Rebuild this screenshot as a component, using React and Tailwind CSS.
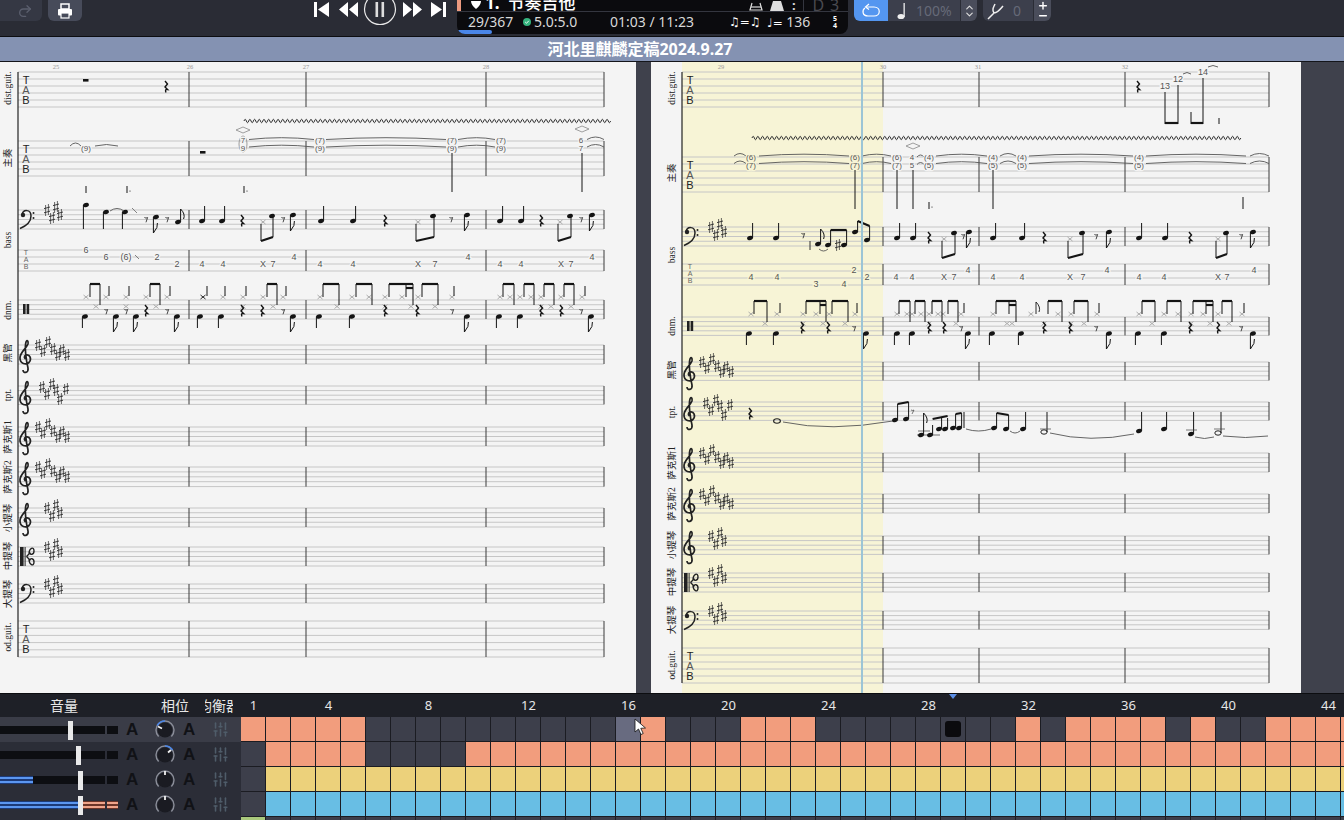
import React from "react";
import { Redo2, SlidersVertical, ChevronUp, ChevronDown, Plus, Minus } from "lucide-react";

const INK = "#141414";
const LINE = "#c6c6c6";

// ---- score drawing helpers ----
const Note = ({ x, y, up, to, flag }) => {
  const sx = up ? x + 2.6 : x - 2.6;
  return (
    <g>
      <ellipse cx={x} cy={y} rx="3" ry="2.1" transform={`rotate(-22 ${x} ${y})`} fill={INK} />
      <line x1={sx} y1={y} x2={sx} y2={to} stroke={INK} strokeWidth="1" />
      {flag && <path d={`M${sx} ${to} q${up ? 5 : 5} ${up ? 5 : -6} ${up ? 3 : 4} ${up ? 10 : -10}`} fill="none" stroke={INK} strokeWidth="1" />}
    </g>
  );
};

const RestQ = ({ x, y }) => (
  <path d={`M${x - 1} ${y - 5} l2.5 3 l-2.5 3 l2.5 2.5 q-3 -.5 -1.5 3`} fill="none" stroke={INK} strokeWidth="1.4" />
);
const Rest8 = ({ x, y }) => (
  <path d={`M${x - 1.6} ${y - 1.5} q1.6 1.2 3.2 0 l-1.6 4.8`} fill="none" stroke="#333" strokeWidth=".9" />
);
const Xh = ({ x, y, c = "#a4a4a4" }) => (
  <path d={`M${x - 2.5} ${y - 2} l5 4 M${x + 2.5} ${y - 2} l-5 4`} stroke={c} strokeWidth=".9" />
);
const Beam = ({ x1, x2, y1, y2 }) => (
  <line x1={x1} x2={x2} y1={y1} y2={y2 ?? y1} stroke={INK} strokeWidth="2.2" />
);
const Stem = ({ x, y1, y2, c = INK, w = 1 }) => <line x1={x} x2={x} y1={y1} y2={y2} stroke={c} strokeWidth={w} />;
const Tie = ({ x1, x2, y, h = 3, flip }) => (
  <path d={`M${x1} ${y} Q${(x1 + x2) / 2} ${flip ? y + h * 2 : y - h * 2} ${x2} ${y}`} fill="none" stroke="#555" strokeWidth=".9" />
);
const Num = ({ x, y, t, bg = "#f4f4f4", size = 9, c = "#555" }) => (
  <text x={x} y={y + 3.2} textAnchor="middle" fontSize={size} fontFamily="Liberation Sans" fill={c} stroke={bg} strokeWidth="2.5" paintOrder="stroke">{t}</text>
);
const Sharp = ({ x, y }) => (
  <g stroke="#2a2a2a">
    <path d={`M${x - 1.4} ${y - 5} v11 M${x + 1.4} ${y - 6} v11`} strokeWidth=".7" />
    <path d={`M${x - 3} ${y - 1.4} l6 -1.6 M${x - 3} ${y + 2.8} l6 -1.6`} strokeWidth=".9" />
  </g>
);
const Treble = ({ x, y }) => (
  <path transform={`translate(${x} ${y})`} d="M7.5 19 C5 19 4.5 16 7 15 C11 14 13 19 10 22.5 C7 25 1 24 1 18 C1 12 7 9 9 4 C9.5 1 8 -1 7 2 C5.5 7 7 20 9 28 C9.8 33 4 34 4 30" fill="none" stroke="#222" strokeWidth="1.7" />
);
const BassClef = ({ x, y }) => (
  <g transform={`translate(${x} ${y})`}>
    <path d="M2 5 C3 -1 11 -1 11 6 C11 12 6 16 0 18.5" fill="none" stroke="#222" strokeWidth="1.5" />
    <circle cx="3" cy="5" r="2.2" fill="#222" />
    <circle cx="13.5" cy="3" r="1" fill="#222" />
    <circle cx="13.5" cy="8" r="1" fill="#222" />
  </g>
);
const AltoClef = ({ x, y }) => (
  <g transform={`translate(${x} ${y})`}>
    <rect x="0" y="0" width="3.6" height="19" fill="#222" />
    <rect x="4.6" y="0" width="1" height="19" fill="#222" />
    <path d="M6.5 9.5 L9 7 C9 1 14 -1 14 4 C14 8 10 8.5 9.5 5 M6.5 9.5 L9 12 C9 18 14 20 14 15 C14 11 10 10.5 9.5 14" fill="none" stroke="#222" strokeWidth="1.4" />
  </g>
);
const TabMark = ({ x, top, small }) =>
  small ? (
    <g fontFamily="Liberation Sans" fontSize="7" fill="#666" textAnchor="middle">
      <text x={x} y={top + 5}>T</text>
      <text x={x} y={top + 12}>A</text>
      <text x={x} y={top + 19}>B</text>
    </g>
  ) : (
    <g fontFamily="Liberation Sans" fontSize="11" fill="#222" textAnchor="middle">
      <text x={x} y={top + 12}>T</text>
      <text x={x} y={top + 22} fill="#555">A</text>
      <text x={x} y={top + 32}>B</text>
    </g>
  );

const Wave = ({ x1, x2, y }) => {
  let d = `M${x1} ${y}`;
  for (let x = x1; x < x2; x += 4.7) d += ` q1.2 -3.4 2.35 0 t2.35 0`;
  return <path d={d} fill="none" stroke="#333" strokeWidth="1" />;
};

const Diamond = ({ x, y }) => (
  <path d={`M${x - 7} ${y} L${x} ${y - 3} L${x + 7} ${y} L${x} ${y + 3} Z`} fill="none" stroke="#888" strokeWidth=".8" />
);

const Lines = ({ x1, x2, top, n, gap }) =>
  Array.from({ length: n }).map((_, i) => (
    <line key={i} x1={x1} x2={x2} y1={top + i * gap} y2={top + i * gap} stroke={LINE} strokeWidth="1" />
  ));

const KEY7 = [[20, 0], [25, 6], [30, -3], [35, 4], [40, 10], [44, 5], [49, 10]];
const KEY6 = [[24, 1], [29, 8], [34, -2], [38, 4], [42, 13], [48, 3]];
const KEY4 = [[29, 0], [34, 8], [38, -3], [42, 5]];

// one instrument staff: lines, barlines, clef, key, rotated label
const Staff = ({ s, left, bars }) => {
  const h = (s.n - 1) * s.gap;
  return (
    <g>
      <Lines x1={left} x2={bars[bars.length - 1]} top={s.top} n={s.n} gap={s.gap} />
      {bars.map((b) => <Stem key={b} x={b} y1={s.top} y2={s.top + h} c="#3a3a3a" />)}
      {s.clef === "t" && <Treble x={left + 1} y={s.top - 5} />}
      {s.clef === "b" && <BassClef x={left + 2} y={s.top} />}
      {s.clef === "a" && <AltoClef x={left + 2} y={s.top} />}
      {s.clef === "p" && <g fill="#222"><rect x={left + 5} y={s.top + 4} width="2.6" height="10" /><rect x={left + 8.6} y={s.top + 4} width="2.6" height="10" /></g>}
      {s.clef === "T" && <TabMark x={left + 8} top={s.top} />}
      {s.clef === "s" && <TabMark x={left + 8} top={s.top} small />}
      {(s.key || []).map(([kx, ky], i) => <Sharp key={i} x={left + kx} y={s.top + ky} />)}
      <text
        transform={`translate(${left - 7} ${s.labelY}) rotate(-90)`}
        textAnchor="middle"
        fontSize="9.5"
        fontFamily="'Liberation Serif','Noto Sans CJK SC',serif"
        fill="#222"
      >
        {s.label}
      </text>
    </g>
  );
};

const BassBar = ({ top, p }) => {
  const [a, b, r, x, n, r8, e] = p;
  return (
    <g>
      <Note x={a} y={top + 11} up to={top - 4} />
      <Note x={b} y={top + 11} up to={top - 4} />
      <RestQ x={r} y={top + 10} />
      <Xh x={x} y={top + 12} />
      <Note x={n} y={top + 6} up to={top + 6} />
      <Stem x={x - 2} y1={top + 14} y2={top + 31} />
      <Stem x={n + 1} y1={top + 6} y2={top + 27} />
      <Beam x1={x - 2} x2={n + 1} y1={top + 31} y2={top + 27} />
      <Rest8 x={r8} y={top + 9} />
      <Note x={e} y={top + 5} to={top + 21} flag />
    </g>
  );
};

const DrumBar = ({ top, xs = [], low = [], beams = [], single = [], q = [], e = [], rq = [], r8 = [] }) => (
  <g>
    {xs.map((x) => <Xh key={x} x={x} y={top - 3} />)}
    {low.map((x) => <Xh key={x} x={x} y={top + 6.5} />)}
    {beams.map(([a, b, sub], i) => (
      <g key={i}>
        <Beam x1={a} x2={b} y1={top - 16} />
        <Stem x={a} y1={top - 16} y2={top - 3} />
        <Stem x={b} y1={top - 16} y2={top + 5} />
        {sub && <><Beam x1={sub} x2={b} y1={top - 12} /><Stem x={sub} y1={top - 16} y2={top - 3} /></>}
      </g>
    ))}
    {single.map((x) => <Stem key={x} x={x} y1={top - 14} y2={top - 4} />)}
    {q.map((x) => <Note key={x} x={x} y={top + 16.5} to={top + 28} />)}
    {e.map((x) => <Note key={x} x={x} y={top + 16.5} to={top + 32} flag />)}
    {rq.map((x) => <RestQ key={x} x={x} y={top + 10} />)}
    {r8.map((x) => <Rest8 key={x} x={x} y={top + 11} />)}
  </g>
);

const BarNo = ({ x, t }) => <text x={x} y="69" textAnchor="middle" fontSize="6.5" fontFamily="Liberation Serif" fill="#999">{t}</text>;

const PAGE1 = [
  { label: "dist.guit.", top: 72, n: 6, gap: 7, clef: "T", labelY: 88 },
  { label: "主奏", top: 141, n: 6, gap: 7, clef: "T", labelY: 158 },
  { label: "bass", top: 210, n: 5, gap: 4.75, clef: "b", key: KEY4, labelY: 240 },
  { label: "", top: 250, n: 4, gap: 7, clef: "s", labelY: 260 },
  { label: "dnm.", top: 300, n: 5, gap: 4.75, clef: "p", labelY: 310 },
  { label: "黑管", top: 345, n: 5, gap: 4.75, clef: "t", key: KEY7, labelY: 353 },
  { label: "tpt.", top: 386, n: 5, gap: 4.6, clef: "t", key: KEY6, labelY: 395 },
  { label: "萨克斯1", top: 427, n: 5, gap: 4.75, clef: "t", key: KEY7, labelY: 437 },
  { label: "萨克斯2", top: 467, n: 5, gap: 4.9, clef: "t", key: KEY7, labelY: 477 },
  { label: "小提琴", top: 508, n: 5, gap: 4.75, clef: "t", key: KEY4, labelY: 518 },
  { label: "中提琴", top: 547, n: 5, gap: 4.75, clef: "a", key: KEY4, labelY: 556 },
  { label: "大提琴", top: 584, n: 5, gap: 4.75, clef: "b", key: KEY4, labelY: 594 },
  { label: "od.guit.", top: 621, n: 6, gap: 7.2, clef: "T", labelY: 637 },
];

const PAGE2 = [
  { label: "dist.guit.", top: 72, n: 6, gap: 7, clef: "T", labelY: 88 },
  { label: "主奏", top: 157, n: 6, gap: 7, clef: "T", labelY: 173 },
  { label: "bass", top: 227, n: 5, gap: 4.75, clef: "b", key: KEY4, labelY: 255 },
  { label: "", top: 264, n: 4, gap: 7, clef: "s", labelY: 270 },
  { label: "dnm.", top: 317, n: 5, gap: 4.6, clef: "p", labelY: 326 },
  { label: "黑管", top: 362, n: 5, gap: 4.6, clef: "t", key: KEY7, labelY: 370 },
  { label: "tpt.", top: 402, n: 5, gap: 4.6, clef: "t", key: KEY6, labelY: 412 },
  { label: "萨克斯1", top: 453, n: 5, gap: 4.75, clef: "t", key: KEY7, labelY: 463 },
  { label: "萨克斯2", top: 494, n: 5, gap: 4.75, clef: "t", key: KEY7, labelY: 504 },
  { label: "小提琴", top: 536, n: 5, gap: 4.6, clef: "t", key: KEY4, labelY: 545 },
  { label: "中提琴", top: 573, n: 5, gap: 4.75, clef: "a", key: KEY4, labelY: 582 },
  { label: "大提琴", top: 611, n: 5, gap: 4.6, clef: "b", key: KEY4, labelY: 620 },
  { label: "od.guit.", top: 648, n: 6, gap: 7, clef: "T", labelY: 665 },
];

const Chord = ({ x, a, b, y, bg, paren = true }) => (
  <g>
    <Num x={x} y={y} t={paren ? `(${a})` : a} bg={bg} size="8" />
    <Num x={x} y={y + 7.5} t={paren ? `(${b})` : b} bg={bg} size="8" />
  </g>
);
const DoubleTie = ({ x1, x2, y, h = 1.8 }) => (
  <g><Tie x1={x1} x2={x2} y={y} h={h} /><Tie x1={x1} x2={x2} y={y + 7.5} h={h} /></g>
);

const ScorePageOne = () => (
  <svg viewBox="0 62 636 631" className="block w-full h-full">
    <BarNo x={56} t="25" /><BarNo x={190} t="26" /><BarNo x={306} t="27" /><BarNo x={486} t="28" />
    {PAGE1.map((s) => <Staff key={s.top} s={s} left={18} bars={[189, 306, 486, 604]} />)}
    <Stem x={18} y1={72} y2={657} c="#222" w={1.2} />

    {/* dist guit */}
    <rect x="83" y="79" width="5.5" height="2.6" fill={INK} />
    <RestQ x={166} y={86} />

    {/* lead */}
    <Wave x1={244} x2={606} y={121} />
    <Tie x1={70} x2={81} y={146} />
    <Num x={86} y={148} t="(9)" size="8" />
    <Tie x1={95} x2={118} y={146} h={1.5} />
    <rect x="200" y="151" width="5.5" height="2.6" fill={INK} />
    <Diamond x={243} y={130} />
    <ellipse cx="243" cy="144" rx="4" ry="8" fill="none" stroke="#888" strokeWidth=".8" />
    <Chord x={243} a="7" b="9" y={140} paren={false} />
    <DoubleTie x1={249} x2={314} y={139.5} />
    <Chord x={320} a="7" b="9" y={140} />
    <DoubleTie x1={326} x2={446} y={139.5} />
    <Chord x={452} a="7" b="9" y={140} />
    <DoubleTie x1={458} x2={495} y={139.5} />
    <Chord x={501} a="7" b="9" y={140} />
    <Diamond x={582} y={129} />
    <Chord x={581} a="6" b="7" y={140} paren={false} />
    <DoubleTie x1={587} x2={604} y={139.5} h={2.5} />
    <Stem x={452} y1={153} y2={192} /><Stem x={582} y1={153} y2={192} />
    <Stem x={86} y1={186} y2={193} /><Stem x={127} y1={186} y2={193} /><Stem x={244} y1={186} y2={193} />
    <circle cx="130" cy="191" r=".6" fill={INK} /><circle cx="247" cy="191" r=".6" fill={INK} />

    {/* bass */}
    <Note x={86} y={205} to={229} />
    <Note x={106} y={212} to={229} />
    <Note x={125} y={212} to={229} />
    <Tie x1={110} x2={124} y={211} h={2.5} />
    <path d="M132 208 l5 5" stroke="#666" strokeWidth=".8" />
    <Rest8 x={146} y={219} />
    <Note x={156} y={217} to={233} flag />
    <Rest8 x={167} y={219} />
    <Note x={178} y={222} up to={209} flag />
    <BassBar top={210} p={[202, 222, 242, 263, 272, 283, 293]} />
    <BassBar top={210} p={[321, 353, 385, 418, 433, 451, 467]} />
    <BassBar top={210} p={[500, 521, 541, 560, 570, 581, 592]} />

    {/* bass tab */}
    {[[86, 250, "6"], [106, 257, "6"], [126, 257, "(6)"], [157, 257, "2"], [177, 264, "2"], [202, 264, "4"], [223, 264, "4"], [263, 264, "X"], [273, 264, "7"], [294, 257, "4"], [320, 264, "4"], [353, 264, "4"], [418, 264, "X"], [435, 264, "7"], [468, 257, "4"], [500, 264, "4"], [521, 264, "4"], [561, 264, "X"], [571, 264, "7"], [592, 257, "4"]].map(([x, y, t], i) => <Num key={i} x={x} y={y} t={t} />)}
    <path d="M135 255 l4 4" stroke="#666" strokeWidth=".8" />

    {/* drums */}
    <DrumBar top={300} xs={[86, 106, 126, 146, 167]} low={[96, 126, 156]} beams={[[90, 100], [150, 160]]} single={[109, 129, 170]} q={[85]} e={[116, 136, 177]} rq={[146]} r8={[106, 126, 167]} />
    <Xh x={203} y={297} c="#111" />
    <DrumBar top={300} xs={[223, 243, 263, 283]} low={[243, 273]} beams={[[267, 277]]} single={[207, 225, 246, 286]} q={[200, 221]} e={[293]} rq={[242, 262]} r8={[283]} />
    <DrumBar top={300} xs={[320, 352, 369, 385, 402, 418, 452]} low={[337, 385, 411, 435]} beams={[[323, 339], [356, 372], [389, 413, 406], [422, 438]]} single={[454]} q={[319, 352]} e={[467]} rq={[385, 417]} r8={[452]} />
    <DrumBar top={300} xs={[500, 510, 520, 531, 541, 561, 582]} low={[541, 551, 571]} beams={[[503, 514], [524, 534], [544, 554], [564, 574]]} single={[585]} q={[499, 520]} e={[591]} rq={[541, 561]} r8={[581]} />
  </svg>
);

const Y = "#f7f4d6";

const ScorePageTwo = () => (
  <svg viewBox="651 62 650 631" className="block w-full h-full">
    <rect x="682" y="62" width="201" height="631" fill={Y} />
    <BarNo x={721} t="29" /><BarNo x={883} t="30" /><BarNo x={978} t="31" /><BarNo x={1125} t="32" />
    {PAGE2.map((s) => <Staff key={s.top} s={s} left={682} bars={[883, 979, 1125, 1269]} />)}
    <Stem x={682} y1={72} y2={683} c="#222" w={1.2} />

    {/* dist guit */}
    <RestQ x={1138} y={86} />
    <Num x={1165} y={86} t="13" />
    <Num x={1178} y={79} t="12" />
    <Num x={1203} y={72} t="14" />
    <Stem x={1165} y1={92} y2={124} /><Stem x={1178} y1={85} y2={124} /><Beam x1={1165} x2={1178} y1={123} />
    <Stem x={1191} y1={112} y2={124} /><Stem x={1203} y1={78} y2={124} /><Beam x1={1191} x2={1203} y1={123} />
    <Stem x={1219} y1={118} y2={124} />
    <Tie x1={1183} x2={1191} y={74} h={1.5} /><Tie x1={1208} x2={1218} y={67} h={1.5} />

    {/* lead */}
    <Wave x1={752} x2={1238} y={138} />
    <Diamond x={913} y={146} />
    <DoubleTie x1={734} x2={746} y={156} h={2.5} />
    <Chord x={751} a="6" b="7" y={157} bg={Y} />
    <DoubleTie x1={759} x2={849} y={156} />
    <Chord x={855} a="6" b="7" y={157} bg={Y} />
    <DoubleTie x1={862} x2={891} y={156} />
    <Chord x={897} a="6" b="7" y={157} />
    <Chord x={912} a="4" b="5" y={157} paren={false} />
    <DoubleTie x1={917} x2={924} y={157} h={2} />
    <Chord x={929} a="4" b="5" y={157} />
    <DoubleTie x1={936} x2={987} y={156} />
    <Chord x={993} a="4" b="5" y={157} />
    <DoubleTie x1={1000} x2={1016} y={156} h={2.5} />
    <Chord x={1022} a="4" b="5" y={157} />
    <DoubleTie x1={1029} x2={1133} y={156} />
    <Chord x={1139} a="4" b="5" y={157} />
    <DoubleTie x1={1146} x2={1246} y={156} />
    <DoubleTie x1={1250} x2={1269} y={156} h={2.5} />
    {[855, 897, 913, 993].map((x) => <Stem key={x} x={x} y1={170} y2={209} />)}
    <Stem x={929} y1={202} y2={209} /><circle cx="932" cy="207" r=".6" fill={INK} />
    <Stem x={1243} y1={197} y2={209} />

    {/* bass */}
    <Note x={750} y={238} up to={223} />
    <Note x={776} y={238} up to={223} />
    <Rest8 x={803} y={235} />
    <Stem x={810} y1={241} y2={250} c="#333" />
    <Note x={818} y={244} up to={229} flag />
    <Tie x1={819} x2={828} y={249} h={2} flip />
    <Note x={828} y={245} up to={230} />
    <Sharp x={838} y={245} />
    <Note x={844} y={245} up to={230} />
    <Beam x1={830.6} x2={846.6} y1={230} />
    <Note x={855} y={232} up to={221} />
    <Note x={867} y={240} up to={226} />
    <Beam x1={857.6} x2={869.6} y1={221} y2={226} />
    <BassBar top={227} p={[897, 913, 929, 944, 954, 963, 969]} />
    <BassBar top={227} p={[993, 1022, 1044, 1070, 1082, 1096, 1109]} />
    <BassBar top={227} p={[1139, 1165, 1190, 1218, 1226, 1241, 1253]} />

    {/* bass tab */}
    {[[751, 277, "4", Y], [777, 277, "4", Y], [816, 284, "3", Y], [844, 284, "4", Y], [854, 270, "2", Y], [867, 277, "2", Y], [896, 277, "4"], [912, 277, "4"], [944, 277, "X"], [954, 277, "7"], [968, 270, "4"], [993, 277, "4"], [1022, 277, "4"], [1070, 277, "X"], [1083, 277, "7"], [1107, 270, "4"], [1139, 277, "4"], [1164, 277, "4"], [1218, 277, "X"], [1227, 277, "7"], [1254, 270, "4"]].map(([x, y, t, bg], i) => <Num key={i} x={x} y={y} t={t} bg={bg} />)}

    {/* drums */}
    <DrumBar top={317} xs={[751, 777, 803, 816, 829, 855]} low={[765, 803, 823, 845]} beams={[[754, 767], [806, 826, 820], [832, 848]]} single={[780, 857]} q={[749, 776]} e={[866]} rq={[802, 828]} r8={[854]} />
    <DrumBar top={317} xs={[897, 907, 912, 921, 929, 938, 943, 961]} low={[929, 956]} beams={[[899, 910], [915, 925], [932, 942], [948, 958]]} single={[964]} q={[897, 912]} e={[968]} rq={[929, 944]} r8={[961]} />
    <DrumBar top={317} xs={[993, 1031, 1058, 1071, 1097]} low={[1007, 1012, 1044, 1071, 1084]} beams={[[996, 1016, 1009], [1048, 1062], [1074, 1088]]} single={[1099]} q={[992, 1021]} e={[1109]} rq={[1044, 1070]} r8={[1096]} />
    <path d="M1036 302 v12 M1036 302 q5 5 3 10" fill="none" stroke={INK} strokeWidth=".9" />
    <DrumBar top={317} xs={[1139, 1164, 1178, 1191, 1203, 1218, 1242]} low={[1152, 1191, 1210, 1229]} beams={[[1142, 1155], [1167, 1181], [1193, 1213, 1206], [1222, 1232]]} single={[1244]} q={[1138, 1164]} e={[1253]} rq={[1190, 1218]} r8={[1241]} />

    {/* tpt */}
    <RestQ x={750} y={413} />
    <ellipse cx="777" cy="421" rx="3.4" ry="2.2" fill="none" stroke="#222" strokeWidth="1.1" />
    <path d="M783 422 Q830 432 893 421" fill="none" stroke="#555" strokeWidth=".9" />
    <Note x={895} y={420} up to={404} />
    <Note x={906} y={419} up to={402} />
    <Beam x1={897.6} x2={908.6} y1={404} y2={402} />
    <path d="M911 410 q2 1 3 0 l-2 4" fill="none" stroke="#444" strokeWidth=".7" />
    {[[917, 435], [918, 431], [928, 435]].map(([x, y], i) => <line key={i} x1={x} x2={x + 12} y1={y} y2={y} stroke="#333" strokeWidth=".7" />)}
    <Note x={921} y={435} up to={413} flag />
    <Note x={930} y={435} up to={425} />
    <Note x={939} y={429} up to={418} />
    <Note x={945} y={429} up to={418} />
    <Beam x1={932.6} x2={947.6} y1={419} y2={416} />
    <Note x={953} y={428} up to={414} />
    <Note x={959} y={428} up to={413} />
    <Beam x1={955.6} x2={961.6} y1={414} y2={413} />
    <Stem x={964} y1={412} y2={428} />
    <Tie x1={966} x2={991} y={429} h={2} flip />
    <Note x={994} y={428} up to={413} />
    <Note x={1006} y={429} up to={415} />
    <Beam x1={996.6} x2={1008.6} y1={413} y2={415} />
    <Tie x1={1010} x2={1020} y={431} h={2} flip />
    <Note x={1023} y={429} up to={412} />
    <ellipse cx="1044" cy="432" rx="3.2" ry="2.2" fill="none" stroke="#222" strokeWidth="1" />
    <Stem x={1047} y1={432} y2={412} />
    <line x1={1040} x2={1051} y1={429} y2={429} stroke="#444" strokeWidth=".7" />
    <path d="M1050 433 Q1090 443 1134 434" fill="none" stroke="#555" strokeWidth=".9" />
    <Note x={1139} y={431} up to={412} />
    <Note x={1164} y={429} up to={412} />
    <Note x={1191} y={434} up to={412} />
    <line x1={1186} x2={1197} y1={430} y2={430} stroke="#444" strokeWidth=".7" />
    <Tie x1={1195} x2={1214} y={437} h={1.5} flip />
    <ellipse cx="1218" cy="433" rx="3.2" ry="2.2" fill="none" stroke="#222" strokeWidth="1" />
    <Stem x={1221} y1={433} y2={412} />
    <line x1={1214} x2={1225} y1={429} y2={429} stroke="#444" strokeWidth=".7" />
    <Tie x1={1223} x2={1268} y={436} h={1.5} flip />

    {/* play cursor */}
    <rect x="861" y="62" width="2" height="631" fill="#9cc5d6" />
  </svg>
);

// ---- toolbar ----
const Transport = () => (
  <div className="flex items-start ml-[232px] w-[143px] h-[27px]">
    <svg width="143" height="27" viewBox="314 0 143 27" fill="#fff">
      <rect x="314" y="2" width="3" height="15" />
      <path d="M329 2 L318 9.5 L329 17 Z" />
      <path d="M348 2 L339 9.5 L348 17 Z M358 2 L349 9.5 L358 17 Z" />
      <circle cx="380" cy="9" r="15.5" fill="none" stroke="#e8e8e8" strokeWidth="1.2" />
      <rect x="375.5" y="2" width="2.6" height="15" fill="#ddd" /><rect x="381.5" y="2" width="2.6" height="15" fill="#ddd" />
      <path d="M403 2 L412 9.5 L403 17 Z M413 2 L422 9.5 L413 17 Z" />
      <path d="M431 2 L442 9.5 L431 17 Z" />
      <rect x="443" y="2" width="3" height="15" />
    </svg>
  </div>
);

const InfoPanel = () => (
  <div className="relative w-[391px] h-[34px] bg-[#0b0b0e] rounded-b-lg overflow-hidden flex flex-col">
    <div className="h-[12px] flex items-end overflow-hidden border-b border-[#34363f] shrink-0">
      <div className="w-[4px] h-full bg-[#ec9a7f]" />
      <div className="flex items-end h-[11px] overflow-hidden ml-[9px] text-white text-[17px] leading-[17px] font-medium">
        <svg width="12" height="8" viewBox="0 0 12 8" className="mb-[2px]" fill="#fff"><path d="M1 0 Q6 -1 11 0 Q11 4 6 8 Q1 4 1 0 Z" /></svg>
        <span className="ml-[3px] font-bold">1.</span>
        <span className="ml-[8px]">节奏吉他</span>
      </div>
      <div className="ml-auto flex items-end h-full">
        <svg width="14" height="9" viewBox="0 0 14 9" fill="none" stroke="#ddd" strokeWidth="1.2"><path d="M3 1 L1 8 H13 L11 1" /><path d="M2 5 H12" /></svg>
        <svg width="14" height="10" viewBox="0 0 14 10" fill="#ddd" className="ml-[7px]"><path d="M3 0 L0 10 H14 L11 0 Z" /></svg>
        <span className="ml-[8px] text-[#ddd] text-[13px] leading-[12px] font-bold">:</span>
        <div className="w-px h-full bg-[#34363f] ml-[7px]" />
        <span className="ml-[9px] mr-[8px] text-[#4a4a50] text-[16px] leading-[11px] tracking-wider">D 3</span>
      </div>
    </div>
    <div className="flex items-center h-[19px] text-[14px] text-[#d8d8d8] leading-none">
      <span className="ml-[11px] w-[55px]">29/367</span>
      <svg width="8" height="8" viewBox="0 0 8 8" className="mr-[3px]">
        <circle cx="4" cy="4" r="4" fill="#35b37e" />
        <path d="M2.2 4 L3.5 5.3 L5.8 2.8" fill="none" stroke="#fff" strokeWidth=".9" />
      </svg>
      <span className="w-[76px]">5.0:5.0</span>
      <span className="w-[119px]">01:03 / 11:23</span>
      <span className="w-[38px] font-['DejaVu_Sans'] text-[12px] text-white">♫=♫</span>
      <span className="w-[66px]"><span className="font-['DejaVu_Sans'] text-[12px] text-white">♩=</span> 136</span>
      <span className="flex flex-col text-[7px] leading-[7px] font-bold text-white"><span>5</span><span>4</span></span>
    </div>
    <div className="absolute left-0 bottom-0 w-[35px] h-[4px] rounded-full bg-[#4a86e8]" />
  </div>
);

const Toolbar = () => (
  <div className="h-[37px] shrink-0 flex items-start bg-[#2a2c35] border-b border-[#0c0d10]">
    <div className="w-[42px] h-[21px] bg-[#353844] rounded-br-md flex items-center justify-end pr-[9px]">
      <Redo2 size={16} className="text-[#5b5f6e]" />
    </div>
    <div className="ml-[6px] w-[34px] h-[21px] bg-[#474b5a] rounded-b-md flex items-center justify-center">
      <svg width="16" height="16" viewBox="0 0 16 16">
        <path d="M4 1 H12 V6 H4 Z" fill="none" stroke="#fff" strokeWidth="1.5" />
        <rect x="1" y="6" width="14" height="6.5" rx="1" fill="#fff" />
        <rect x="4" y="10" width="8" height="5" fill="#474b5a" stroke="#fff" strokeWidth="1.2" />
      </svg>
    </div>
    <Transport />
    <InfoPanel />
    <div className="ml-[6px] flex h-[21px] rounded-b-md overflow-hidden">
      <div className="w-[34px] bg-[#5496f0] flex items-center justify-center">
        <svg width="20" height="15" viewBox="0 0 20 15" fill="none" stroke="#fff" strokeWidth="1.2"><path d="M5 4 H13 C20 4 20 13 13 13 H7 C1 13 1 7 4 5" /><path d="M8 1 L4.5 4 L8 6.5" /></svg>
      </div>
      <div className="w-[72px] bg-[#3c3f4c] flex items-center">
        <svg width="10" height="18" viewBox="0 0 10 18" className="ml-[9px]"><ellipse cx="4" cy="14.5" rx="3.5" ry="2.6" fill="#eee" /><rect x="6.5" y="1" width="1.3" height="14" fill="#eee" /></svg>
        <span className="ml-[9px] text-[14px] text-[#666a78]">100%</span>
      </div>
      <div className="w-[17px] bg-[#4a4d5b] border-l border-[#2a2c35] flex flex-col items-center justify-center text-[#ddd]">
        <ChevronUp size={11} strokeWidth={2.5} className="-mb-[2px]" /><ChevronDown size={11} strokeWidth={2.5} className="-mt-[2px]" />
      </div>
    </div>
    <div className="ml-[6px] flex h-[21px] rounded-b-md overflow-hidden">
      <div className="w-[50px] bg-[#3c3f4c] flex items-center">
        <svg width="18" height="18" viewBox="0 0 18 18" fill="none" stroke="#eee" strokeWidth="1.5" className="ml-[4px]"><path d="M1 17 L7 11 M7 11 C5 8 6 6 8 2 M7 11 C10 11 12 9 16 4" /></svg>
        <span className="ml-[8px] text-[14px] text-[#666a78]">0</span>
      </div>
      <div className="w-[18px] bg-[#4a4d5b] border-l border-[#2a2c35] flex flex-col items-center justify-center text-white">
        <Plus size={12} strokeWidth={3} className="-mb-[1px]" /><Minus size={12} strokeWidth={3} className="-mt-[1px]" />
      </div>
    </div>
  </div>
);

// ---- track list ----
const Knob = ({ arc, tip, blue }) => (
  <svg width="22" height="22" viewBox="0 0 22 22">
    <circle cx="11" cy="11" r="7.5" fill="#1a1b22" />
    <path d="M4.6 17.4 A9 9 0 1 1 17.4 17.4" fill="none" stroke="#8b8e99" strokeWidth="1.4" />
    {blue && <path d={arc} fill="none" stroke="#4a86e8" strokeWidth="1.6" />}
    <line x1={tip[0]} y1={tip[1]} x2={tip[2]} y2={tip[3]} stroke="#f2f2f2" strokeWidth="1.8" />
  </svg>
);

const TRACKS = [
  { bg: "bg-[#3a3c47]", thumb: 68, blue: 0, red: false, knob: { blue: true, arc: "M11 2 A9 9 0 0 0 3.2 6.5", tip: [8, 9.5, 4, 7.5] } },
  { bg: "bg-[#2b2d37]", thumb: 76, blue: 0, red: false, knob: { blue: true, arc: "M11 2 A9 9 0 0 1 18.5 6", tip: [14, 8.5, 17, 6] } },
  { bg: "bg-[#2b2d37]", thumb: 78, blue: 33, red: false, knob: { tip: [11, 6, 11, 2] } },
  { bg: "bg-[#2b2d37]", thumb: 78, blue: 78, red: true, knob: { tip: [11, 6, 11, 2] } },
  { bg: "bg-[#2b2d37]", thumb: 78, blue: 0, red: false, knob: { tip: [11, 6, 11, 2] } },
];

const Strip = ({ w, c }) => (
  <div className="h-[8px] py-[1px] flex flex-col justify-between" style={{ width: w, background: c[0] }}>
    <div className="h-[2px]" style={{ background: c[1] }} />
    <div className="h-[2px]" style={{ background: c[1] }} />
  </div>
);

const TrackRow = ({ t }) => (
  <div className={`h-[25px] shrink-0 flex items-center ${t.bg}`}>
    <div className="relative w-[105px] h-[8px] bg-[#0d0e12]">
      {t.blue > 0 && <Strip w={t.blue} c={["#1c3a78", "#5b96f0"]} />}
      {t.red && <div className="absolute right-0 top-0 w-[22px]"><Strip w={22} c={["#6d3527", "#efa48a"]} /></div>}
      <div className="absolute top-[-5px] w-[5px] h-[19px] bg-[#e9e9ea]" style={{ left: t.thumb }} />
    </div>
    <div className="ml-[2px] w-[11px] h-[8px]">
      {t.red ? <Strip w={11} c={["#6d3527", "#efa48a"]} /> : <div className="h-full bg-[#0d0e12]" />}
    </div>
    <span className="ml-[8px] w-[12px] text-center text-[17px] leading-none font-bold text-[#111216] font-['Liberation_Sans']">A</span>
    <div className="ml-[16px] w-[22px] flex"><Knob {...t.knob} /></div>
    <span className="ml-[7px] w-[12px] text-center text-[17px] leading-none font-bold text-[#111216] font-['Liberation_Sans']">A</span>
    <SlidersVertical size={17} className="ml-[17px] text-[#4f5c69]" strokeWidth={2.2} />
  </div>
);

// ---- arrangement grid ----
const O = "bg-[#f29d7d]";
const N = "bg-[#ecd17b]";
const B = "bg-[#68bee4]";
const E = "bg-[#3d3f4b]";
const range = (...pairs) => pairs.flatMap(([a, b]) => Array.from({ length: b - a + 1 }, (_, i) => a + i));
const ROW1 = new Set(range([1, 5], [17, 17], [21, 23], [32, 32], [34, 37], [39, 39], [42, 45]));
const ROW2 = new Set(range([2, 5], [10, 45]));
const BARS = Array.from({ length: 45 }, (_, i) => i + 1);

const cellClass = (row, bar) => {
  if (row === 0) return bar === 16 ? "bg-[#686b80]" : ROW1.has(bar) ? O : E;
  if (row === 1) return ROW2.has(bar) ? O : E;
  if (row === 2) return bar === 1 ? E : N;
  if (row === 3) return bar === 1 ? E : B;
  return bar === 1 ? "bg-[#a9c87c]" : E;
};

const Timeline = () => (
  <div className="flex-1 overflow-hidden bg-[#1b1c22]">
    <div className="flex h-[23px] w-[1125px] bg-[#1e2027]">
      {BARS.map((b) => (
        <div key={b} className="relative w-[25px] shrink-0 flex items-center justify-center text-[13px] text-[#e6e6e6]">
          {(b === 1 || b % 4 === 0) && <span>{b}</span>}
          {b === 29 && <div className="absolute left-[8px] top-0 w-0 h-0 border-l-[4px] border-r-[4px] border-t-[5px] border-l-transparent border-r-transparent border-t-[#5b8fe6]" />}
        </div>
      ))}
    </div>
    {[0, 1, 2, 3, 4].map((row) => (
      <div key={row} className="flex w-[1125px] h-[25px]">
        {BARS.map((b) => (
          <div key={b} className={`relative w-[25px] shrink-0 border-r border-b border-[#1b1c22] flex items-center justify-center ${cellClass(row, b)}`}>
            {row === 0 && b === 29 && <div className="w-[16px] h-[16px] rounded-[3px] bg-[#0b0b0e]" />}
            {row === 0 && b === 16 && (
              <svg width="13" height="18" viewBox="0 0 13 18" className="absolute left-[18px] top-[1px] z-10">
                <path d="M1 1 L1 14 L4.5 11 L7 16.5 L9.2 15.5 L6.8 10.3 L11.5 10 Z" fill="#fff" stroke="#111" strokeWidth=".8" />
              </svg>
            )}
          </div>
        ))}
      </div>
    ))}
  </div>
);

const BottomPanel = () => (
  <div className="h-[127px] shrink-0 flex bg-[#1e2027] border-t border-[#0c0d10] overflow-hidden">
    <div className="w-[241px] shrink-0 flex flex-col">
      <div className="h-[23px] shrink-0 flex items-center text-[14px] text-[#e8e8e8] bg-[#1e2027]">
        <span className="ml-[50px] w-[30px]">音量</span>
        <span className="ml-[81px] w-[30px]">相位</span>
        <div className="ml-[14px] w-[28px] flex justify-center overflow-hidden whitespace-nowrap"><span className="shrink-0">均衡器</span></div>
      </div>
      {TRACKS.map((t, i) => <TrackRow key={i} t={t} />)}
    </div>
    <Timeline />
  </div>
);

export default function App() {
  return (
    <div className="w-[1344px] h-[820px] flex flex-col overflow-hidden bg-[#3f414c] font-['Noto_Sans','Noto_Sans_CJK_SC',sans-serif]">
      <Toolbar />
      <div className="h-[25px] shrink-0 flex items-center justify-center bg-[#8492b2] border-b border-[#14151a] text-white text-[16px] font-bold pr-[64px]">
        河北里麒麟定稿2024.9.27
      </div>
      <div className="flex-1 min-h-0 flex">
        <div className="w-[636px] bg-[#f4f4f4]"><ScorePageOne /></div>
        <div className="w-[650px] ml-[15px] bg-[#f4f4f4]"><ScorePageTwo /></div>
      </div>
      <BottomPanel />
    </div>
  );
}
